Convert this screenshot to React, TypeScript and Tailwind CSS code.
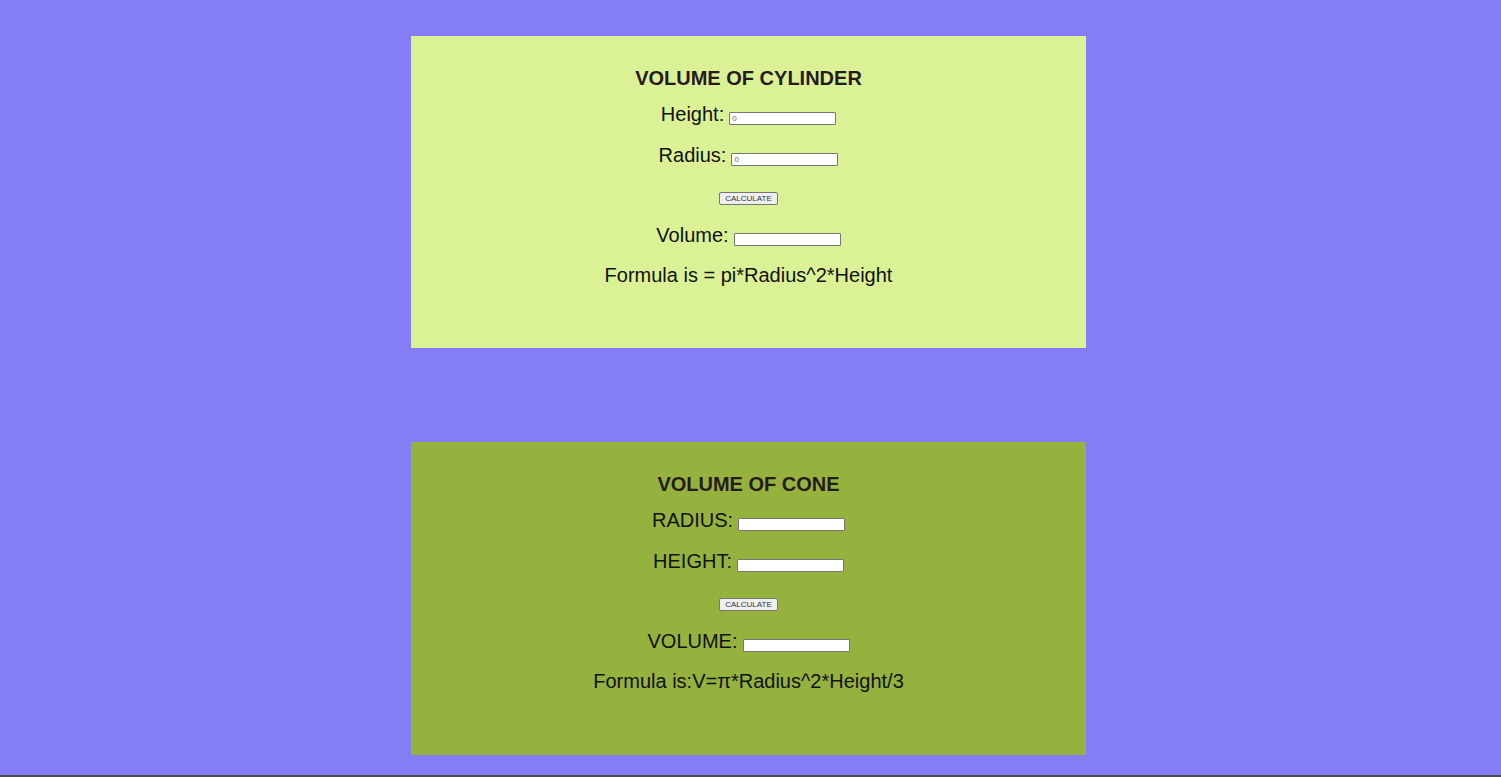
import React from 'react';

type Field = { label: string; value: string };

interface CalcCardProps {
  title: string;
  bg: string;
  height: string;
  fields: Field[];
  resultLabel: string;
  formula: string;
}

function SmallInput({ value }: { value: string }) {
  return (
    <input
      type="text"
      readOnly
      value={value}
      className="ml-[5px] inline-block h-[13px] w-[107px] rounded-[1px] border border-[#767676] bg-white px-[2px] py-0 align-baseline text-[8px] leading-[9px] text-[#6b6b6b] outline-none"
    />
  );
}

function CalcCard({ title, bg, height, fields, resultLabel, formula }: CalcCardProps) {
  return (
    <div className={`ml-[411px] w-[675px] pt-[31px] text-center ${height} ${bg}`}>
      <div className="h-[23px] text-[20px] font-bold leading-[23px] text-[#261b1b]">{title}</div>
      <div className="mt-[13px] h-[23px] text-[20px] leading-[23px] text-[#111]">
        {fields[0].label}
        <SmallInput value={fields[0].value} />
      </div>
      <div className="mt-[18px] h-[23px] text-[20px] leading-[23px] text-[#111]">
        {fields[1].label}
        <SmallInput value={fields[1].value} />
      </div>
      <div className="mt-[25px] flex h-[13px] justify-center">
        <button className="h-[13px] w-[59px] rounded-[2px] border border-[#767676] bg-[#efefef] p-0 text-[8px] leading-[11px] text-[#333]">
          CALCULATE
        </button>
      </div>
      <div className="mt-[19px] h-[23px] text-[20px] leading-[23px] text-[#111]">
        {resultLabel}
        <SmallInput value="" />
      </div>
      <div className="mt-[17px] h-[23px] text-[20px] leading-[23px] text-[#111]">{formula}</div>
    </div>
  );
}

export default function App() {
  return (
    <div
      className="box-border h-[777px] overflow-hidden border-b-2 border-[#4b4b58] bg-[#857df6] pt-[36px]"
      style={{ fontFamily: '"Liberation Sans", Arial, sans-serif' }}
    >
      <CalcCard
        title="VOLUME OF CYLINDER"
        bg="bg-[#dbf195]"
        height="h-[312px]"
        fields={[
          { label: 'Height:', value: '0' },
          { label: 'Radius:', value: '0' },
        ]}
        resultLabel="Volume:"
        formula="Formula is = pi*Radius^2*Height"
      />
      <div className="h-[94px]" />
      <CalcCard
        title="VOLUME OF CONE"
        bg="bg-[#95b23e]"
        height="h-[313px]"
        fields={[
          { label: 'RADIUS:', value: '' },
          { label: 'HEIGHT:', value: '' },
        ]}
        resultLabel="VOLUME:"
        formula="Formula is:V=π*Radius^2*Height/3"
      />
    </div>
  );
}
